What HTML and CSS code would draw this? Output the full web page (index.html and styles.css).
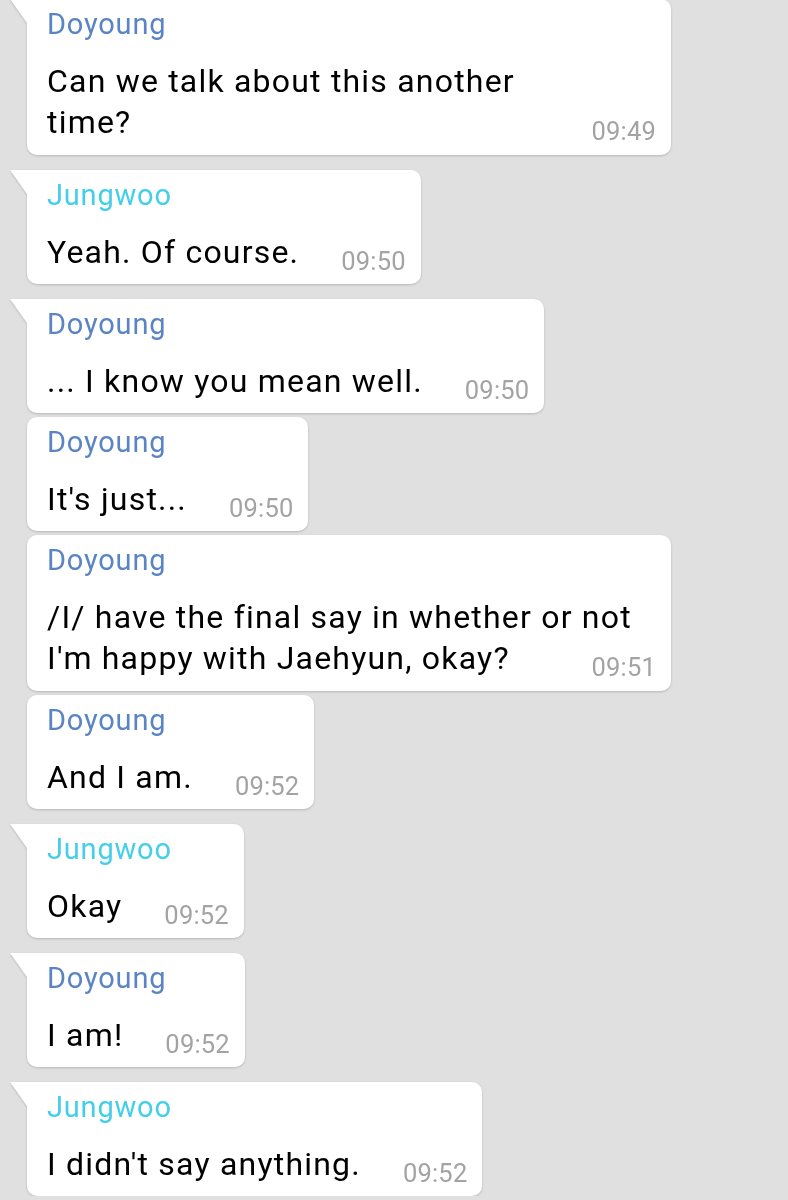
FILE: index.html
```html
<!DOCTYPE html>
<html>
<head>
<link rel="stylesheet" href="styles.css">
</head>
<body>

<div class="chat">
    <div class="msg first-in-group wide">
        <div class="name doyoung">Doyoung</div>
        <div class="text">Can we talk about this another<br>time?<span class="time">09:49</span></div>
    </div>

    <div class="msg first-in-group">
        <div class="name jungwoo">Jungwoo</div>
        <div class="text">Yeah. Of course.<span class="time">09:50</span></div>
    </div>

    <div class="msg first-in-group">
        <div class="name doyoung">Doyoung</div>
        <div class="text">... I know you mean well.<span class="time">09:50</span></div>
    </div>
    <div class="msg">
        <div class="name doyoung">Doyoung</div>
        <div class="text">It's just...<span class="time">09:50</span></div>
    </div>
    <div class="msg wide">
        <div class="name doyoung">Doyoung</div>
        <div class="text">/I/ have the final say in whether or not<br>I'm happy with Jaehyun, okay?<span class="time">09:51</span></div>
    </div>
    <div class="msg">
        <div class="name doyoung">Doyoung</div>
        <div class="text">And I am.<span class="time">09:52</span></div>
    </div>

    <div class="msg first-in-group">
        <div class="name jungwoo">Jungwoo</div>
        <div class="text">Okay<span class="time">09:52</span></div>
    </div>

    <div class="msg first-in-group">
        <div class="name doyoung">Doyoung</div>
        <div class="text">I am!<span class="time">09:52</span></div>
    </div>

    <div class="msg first-in-group">
        <div class="name jungwoo">Jungwoo</div>
        <div class="text">I didn't say anything.<span class="time">09:52</span></div>
    </div>
</div>

</body>
</html>
```

FILE: styles.css
```css
body {
    background: #e0e0e0;
    margin: 0;
    font-family: Roboto, "Liberation Sans", sans-serif;
}

.chat {
    display: flex;
    flex-direction: column;
    align-items: flex-start;
    padding: 0 0 0 27px;
}

.msg {
    position: relative;
    display: flow-root;
    background: #fff;
    border-radius: 10px;
    padding: 8px 15px 11px 20px;
    margin-top: 4px;
    filter: drop-shadow(0 1px 1px rgba(0, 0, 0, 0.18));
}

.msg.first-in-group {
    margin-top: 15px;
    border-top-left-radius: 0;
}

.msg:first-child {
    margin-top: -1px;
}

/* little tail on the first bubble of a run */
.msg.first-in-group::before {
    content: "";
    position: absolute;
    left: -17px;
    top: 0;
    width: 17px;
    height: 24px;
    background: #fff;
    clip-path: polygon(0 0, 100% 0, 100% 100%);
}

.msg.wide {
    width: 609px;
    padding-bottom: 12px;
}

.name {
    font-size: 29px;
    line-height: 34px;
    letter-spacing: 0.8px;
}

.name.doyoung {
    color: #5a84c3;
}

.name.jungwoo {
    color: #44cfe9;
}

.text {
    margin-top: 20px;
    font-size: 32px;
    line-height: 41px;
    letter-spacing: 1.2px;
    color: #000;
}

.time {
    float: right;
    margin: 9px 0 -9px 42px;
    font-size: 25.5px;
    line-height: 41px;
    letter-spacing: 0.2px;
    color: #a3a3a3;
}
```
